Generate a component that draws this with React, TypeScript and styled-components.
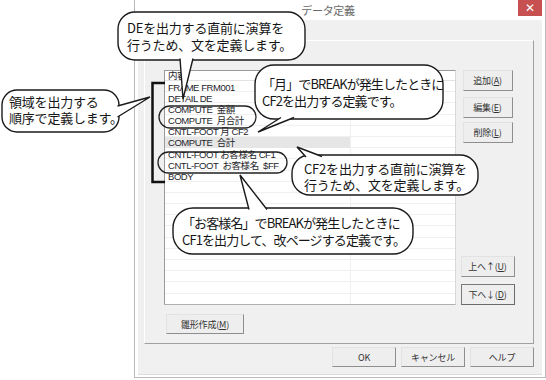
import React from "react";
import styled, { createGlobalStyle } from "styled-components";

const GlobalStyle = createGlobalStyle`
  html, body {
    margin: 0;
    padding: 0;
    background: #fff;
  }
  body {
    width: 546px;
    height: 380px;
    overflow: hidden;
    font-family: "Liberation Sans", "Noto Sans CJK JP", sans-serif;
  }
`;

const Page = styled.div`
  position: relative;
  width: 546px;
  height: 380px;
  box-sizing: border-box;
  padding-left: 134px;
  display: flex;
  align-items: flex-start;
`;

const Window = styled.div`
  width: 412px;
  height: 378px;
  box-sizing: border-box;
  border: 1px solid #b9b9b9;
  border-top: none;
  background: #fff;
  padding: 0 3px 2px 3px;
  display: flex;
  flex-direction: column;
`;

const TitleBar = styled.div`
  height: 20px;
  flex: none;
  display: flex;
  align-items: flex-start;
`;

const Title = styled.div`
  flex: 1;
  text-align: center;
  font-size: 11px;
  line-height: 20px;
  color: #6a6a6a;
  font-family: "Noto Sans CJK JP", sans-serif;
  letter-spacing: -0.3px;
`;

const CloseButton = styled.div`
  width: 24px;
  height: 16px;
  background: #c75050;
  color: #fff;
  font-size: 12px;
  line-height: 16px;
  text-align: center;
  font-family: "DejaVu Sans", sans-serif;
`;

const Client = styled.div`
  flex: 1;
  background: #f0f0f0;
  display: flex;
  flex-direction: column;
  padding: 20px 8px 0 6px;
  border-bottom: 1px solid #dcdcdc;
`;

const Panel = styled.div`
  height: 304px;
  box-sizing: border-box;
  border: 1px solid;
  border-color: #fff #a0a0a0 #a0a0a0 #fff;
  padding: 29px 0 9px 19px;
  display: flex;
  flex-direction: column;
`;

const PanelBody = styled.div`
  display: flex;
  gap: 4px;
`;

const ListView = styled.div`
  width: 292px;
  height: 235px;
  box-sizing: border-box;
  border: 1px solid #9a9a9a;
  border-right-color: #d8d8d8;
  border-bottom-color: #b0b0b0;
  background: #fff;
  overflow: hidden;
`;

const Row = styled.div<{ $header?: boolean }>`
  display: grid;
  grid-template-columns: 185px 1fr;
  height: ${(p) => (p.$header ? "10px" : "11.2px")};
  box-sizing: border-box;
  border-bottom: 1px solid ${(p) => (p.$header ? "#e2e2e2" : "#f0f0f0")};
`;

const Cell = styled.div<{ $selected?: boolean; $header?: boolean }>`
  padding: ${(p) => (p.$header ? "0" : "1.5px")} 0 0 3px;
  font-size: 9.5px;
  line-height: ${(p) => (p.$header ? "9px" : "9.5px")};
  letter-spacing: -0.45px;
  white-space: pre;
  color: #1e1e2a;
  background: ${(p) => (p.$selected ? "#e6e6e6" : "transparent")};
  & + & {
    border-left: 1px solid #f0f0f0;
  }
`;

const SideColumn = styled.div`
  width: 55px;
  display: flex;
  flex-direction: column;
  justify-content: space-between;
  align-items: center;
`;

const ButtonGroup = styled.div`
  display: flex;
  flex-direction: column;
  align-items: center;
`;

const Button = styled.div<{ $w: number; $h?: number; $mt?: number; $focus?: boolean }>`
  width: ${(p) => p.$w}px;
  height: ${(p) => p.$h ?? 21}px;
  margin-top: ${(p) => p.$mt ?? 0}px;
  box-sizing: border-box;
  border: 1px solid;
  border-color: ${(p) =>
    p.$focus ? "#7a7a7a #6a6a6a #6a6a6a #7a7a7a" : "#e2e2e2 #8e8e8e #8e8e8e #e2e2e2"};
  background: #eeeeee;
  display: flex;
  align-items: center;
  justify-content: center;
  font-size: 9px;
  color: #333;
  font-family: "Noto Sans CJK JP", sans-serif;
  letter-spacing: -0.2px;
`;

const Under = styled.span`
  text-decoration: underline;
`;

const TemplateRow = styled.div`
  margin-top: 9px;
  padding-left: 2px;
  display: flex;
`;

const Footer = styled.div`
  margin-top: 3px;
  display: flex;
  justify-content: flex-end;
  gap: 5px;
`;

/* annotations drawn over the dialog */
const Overlay = styled.div`
  position: absolute;
  left: 0;
  top: 0;
  width: 546px;
  height: 380px;
  pointer-events: none;
`;

const Drawing = styled.svg`
  position: absolute;
  left: 0;
  top: 0;
`;

const Note = styled.div<{ $x: number; $y: number; $lh: number; $ls: number }>`
  position: absolute;
  left: ${(p) => p.$x}px;
  top: ${(p) => p.$y}px;
  font-family: "Noto Sans CJK JP", sans-serif;
  font-size: 13px;
  line-height: ${(p) => p.$lh}px;
  letter-spacing: ${(p) => p.$ls}px;
  color: #161616;
  white-space: nowrap;
`;

type Pt = [number, number];

interface Callout {
  box: [number, number, number, number];
  r: number;
  tail: [Pt, Pt, Pt];
  lines: string[];
  tx: number;
  ty: number;
  lh: number;
  ls: number;
}

const callouts: Callout[] = [
  {
    box: [118, 12, 187, 48],
    r: 17,
    tail: [[180, 58.5], [183, 99], [193, 58.5]],
    lines: ["DEを出力する直前に演算を", "行うため、文を定義します。"],
    tx: 127,
    ty: 19,
    lh: 17,
    ls: -0.2,
  },
  {
    box: [2, 90, 117, 42],
    r: 15,
    tail: [[117.5, 106], [150, 97], [117.5, 117]],
    lines: ["領域を出力する", "順序で定義します。"],
    tx: 9,
    ty: 94,
    lh: 16,
    ls: -0.2,
  },
  {
    box: [255, 65, 188, 54],
    r: 19,
    tail: [[281, 117.5], [258, 132], [294, 117.5]],
    lines: ["「月」でBREAKが発生したときに", "CF2を出力する定義です。"],
    tx: 262,
    ty: 75,
    lh: 17,
    ls: -0.9,
  },
  {
    box: [292, 155, 186, 40],
    r: 18,
    tail: [[306, 157], [297, 147], [322, 156.5]],
    lines: ["CF2を出力する直前に演算を", "行うため、文を定義します。"],
    tx: 304,
    ty: 161,
    lh: 16,
    ls: -0.2,
  },
  {
    box: [173, 208, 240, 46],
    r: 20,
    tail: [[249, 209.5], [240, 175], [267, 209.5]],
    lines: ["「お客様名」でBREAKが発生したときに", "CF1を出力して、改ページする定義です。"],
    tx: 182,
    ty: 214,
    lh: 17,
    ls: -0.9,
  },
];

const rows = [
  "FRAME FRM001",
  "DETAIL DE",
  "COMPUTE  金額",
  "COMPUTE  月合計",
  "CNTL-FOOT 月 CF2",
  "COMPUTE  合計",
  "CNTL-FOOT お客様名 CF1",
  "CNTL-FOOT  お客様名  $FF",
  "BODY",
];

const SELECTED = 5;
const TOTAL_ROWS = 21;

const Annotations: React.FC = () => (
  <Overlay>
    <Drawing width={546} height={380} viewBox="0 0 546 380">
      <path d="M165 83 H152.5 V182 H165" fill="none" stroke="#111" strokeWidth={2.5} />
      <rect x={159} y={106} width={97} height={22} rx={11} fill="none" stroke="#222" strokeWidth={1.3} />
      <rect x={158} y={152} width={129} height={21} rx={10.5} fill="none" stroke="#222" strokeWidth={1.3} />
      {callouts.map((c, i) => (
        <g key={i}>
          <rect
            x={c.box[0]}
            y={c.box[1]}
            width={c.box[2]}
            height={c.box[3]}
            rx={c.r}
            fill="#fff"
            stroke="#1a1a1a"
            strokeWidth={1.4}
          />
          <polyline
            points={c.tail.map((p) => p.join(",")).join(" ")}
            fill="#fff"
            stroke="#1a1a1a"
            strokeWidth={1.4}
          />
        </g>
      ))}
    </Drawing>
    {callouts.map((c, i) => (
      <Note key={i} $x={c.tx} $y={c.ty} $lh={c.lh} $ls={c.ls}>
        {c.lines.map((l) => (
          <div key={l}>{l}</div>
        ))}
      </Note>
    ))}
  </Overlay>
);

export default function App() {
  const list = Array.from({ length: TOTAL_ROWS }, (_, i) => rows[i] ?? "");
  return (
    <>
      <GlobalStyle />
      <Page>
        <Window>
          <TitleBar>
            <Title>データ定義</Title>
            <CloseButton>✕</CloseButton>
          </TitleBar>
          <Client>
            <Panel>
              <PanelBody>
                <ListView>
                  <Row $header>
                    <Cell $header>内容</Cell>
                    <Cell $header />
                  </Row>
                  {list.map((text, i) => (
                    <Row key={i}>
                      <Cell $selected={i === SELECTED}>{text}</Cell>
                      <Cell />
                    </Row>
                  ))}
                </ListView>
                <SideColumn>
                  <ButtonGroup>
                    <Button $w={50}>
                      追加(<Under>A</Under>)
                    </Button>
                    <Button $w={50} $mt={6}>
                      編集(<Under>E</Under>)
                    </Button>
                    <Button $w={50} $mt={4}>
                      削除(<Under>L</Under>)
                    </Button>
                  </ButtonGroup>
                  <ButtonGroup>
                    <Button $w={54}>
                      上へ↑(<Under>U</Under>)
                    </Button>
                    <Button $w={54} $mt={7} $focus>
                      下へ↓(<Under>D</Under>)
                    </Button>
                  </ButtonGroup>
                </SideColumn>
              </PanelBody>
              <TemplateRow>
                <Button $w={78} $h={20}>
                  雛形作成(<Under>M</Under>)
                </Button>
              </TemplateRow>
            </Panel>
            <Footer>
              <Button $w={64} $h={20}>
                OK
              </Button>
              <Button $w={64} $h={20}>
                キャンセル
              </Button>
              <Button $w={64} $h={20}>
                ヘルプ
              </Button>
            </Footer>
          </Client>
        </Window>
        <Annotations />
      </Page>
    </>
  );
}
